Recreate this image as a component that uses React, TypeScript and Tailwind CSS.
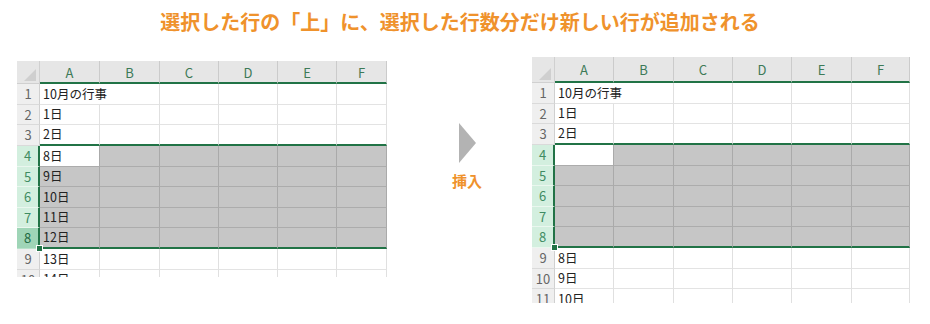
const ROW_H = ["h-[21px]", "h-[20px]", "h-[21px]", "h-[21px]", "h-[20px]", "h-[21px]", "h-[20px]", "h-[21px]", "h-[21px]", "h-[20px]", "h-[21px]", "h-[20px]"];
const LETTERS = ["A", "B", "C", "D", "E", "F"];

type SheetProps = {
  cols: string[];
  values: string[];
  headerH: string;
  boxH: string;
  activeRow?: boolean;
  className?: string;
};

function Corner() {
  return (
    <svg width="22" height="20" viewBox="0 0 22 20" className="block">
      <polygon points="19,6 19,18 7,18" fill="#cfcfcf" />
    </svg>
  );
}

function Sheet({ cols, values, headerH, boxH, activeRow, className }: SheetProps) {
  return (
    <div className={`${boxH} overflow-hidden shrink-0 ${className ?? ""}`}>
      {/* column headers */}
      <div className="flex">
        <div className={`w-[23px] ${headerH} shrink-0 bg-[#e6e6e6] border-r border-b border-[#d0d0d0] flex items-end justify-end`}>
          <Corner />
        </div>
        {cols.map((w, j) => (
          <div
            key={j}
            className={`${w} ${headerH} shrink-0 bg-[#e6e6e6] border-r border-r-[#cbcbcb] border-b-2 border-b-[#217346] flex items-center justify-center pt-[2px] text-[13px] text-[#3d7a57]`}
          >
            {LETTERS[j]}
          </div>
        ))}
      </div>

      {values.map((v, i) => {
        const sel = i >= 3 && i <= 7;
        const rowH = ROW_H[i];
        const headCls = sel
          ? activeRow && i === 7
            ? "bg-[#9fd5b7] text-[#1f6b43] border-r-2 border-r-[#217346] border-b-[#b9e2cb]"
            : "bg-[#d3efdf] text-[#3f8c62] border-r-2 border-r-[#217346] border-b-[#eaf7ef]"
          : "bg-[#efefef] text-[#666666] border-r border-r-[#d0d0d0] border-b-[#dadada]";
        return (
          <div key={i} className="flex">
            <div className={`w-[23px] ${rowH} shrink-0 border-b flex items-center justify-center text-[13px] ${headCls}`}>
              {i + 1}
            </div>
            {cols.map((w, j) => {
              const active = i === 3 && j === 0;
              let cls = "border-r border-r-[#e0e0e0] border-b border-b-[#e3e3e3]";
              if (sel && !active) cls = "bg-[#c6c6c6] border-r border-r-[#aaaaaa] border-b border-b-[#acacac]";
              if (active) cls = "bg-white border-r border-r-[#aaaaaa] border-b border-b-[#acacac]";
              if (i === 2) cls = "border-r border-r-[#e0e0e0] border-b-2 border-b-[#217346]";
              if (i === 7) cls = "bg-[#c6c6c6] border-r border-r-[#aaaaaa] border-b-2 border-b-[#217346]";
              if (i === 0 && j === 0) cls = "border-b border-b-[#e3e3e3]";
              return (
                <div
                  key={j}
                  className={`${w} ${rowH} shrink-0 relative flex items-center pl-[3px] text-[12.5px] text-[#222222] whitespace-nowrap ${cls}`}
                >
                  {j === 0 ? v : ""}
                  {i === 7 && j === 0 && (
                    <div className="absolute -left-[4px] -bottom-[5px] w-[7px] h-[7px] bg-[#217346] border border-white" />
                  )}
                </div>
              );
            })}
          </div>
        );
      })}
    </div>
  );
}

export default function App() {
  return (
    <div className="w-[930px] h-[324px] bg-white overflow-hidden font-['Noto_Sans_CJK_JP','Noto_Sans',sans-serif]">
      <h1 className="pt-[8px] pr-[10px] text-center text-[20px] leading-[28px] font-bold text-[#ef922c]">
        選択した行の「上」に、選択した行数分だけ新しい行が追加される
      </h1>

      <div className="flex items-start mt-[21px] pl-[17px]">
        <Sheet
          className="mt-[4px]"
          headerH="h-[23px]"
          boxH="h-[216px]"
          activeRow
          cols={["w-[60px]", "w-[60px]", "w-[59px]", "w-[59px]", "w-[59px]", "w-[50px]"]}
          values={["10月の行事", "1日", "2日", "8日", "9日", "10日", "11日", "12日", "13日", "14日"]}
        />

        <div className="w-[145px] shrink-0 flex flex-col items-center pl-[15px] pt-[66px]">
          <svg width="17" height="40" viewBox="0 0 17 40" className="block">
            <polygon points="0,0 17,20 0,40" fill="#b3b3b3" />
          </svg>
          <div className="mt-[8px] text-[15px] leading-[20px] font-bold text-[#ef922c]">挿入</div>
        </div>

        <Sheet
          headerH="h-[26px]"
          boxH="h-[246px]"
          cols={["w-[59px]", "w-[60px]", "w-[59px]", "w-[59px]", "w-[60px]", "w-[58px]"]}
          values={["10月の行事", "1日", "2日", "", "", "", "", "", "8日", "9日", "10日", "11日"]}
        />
      </div>
    </div>
  );
}
